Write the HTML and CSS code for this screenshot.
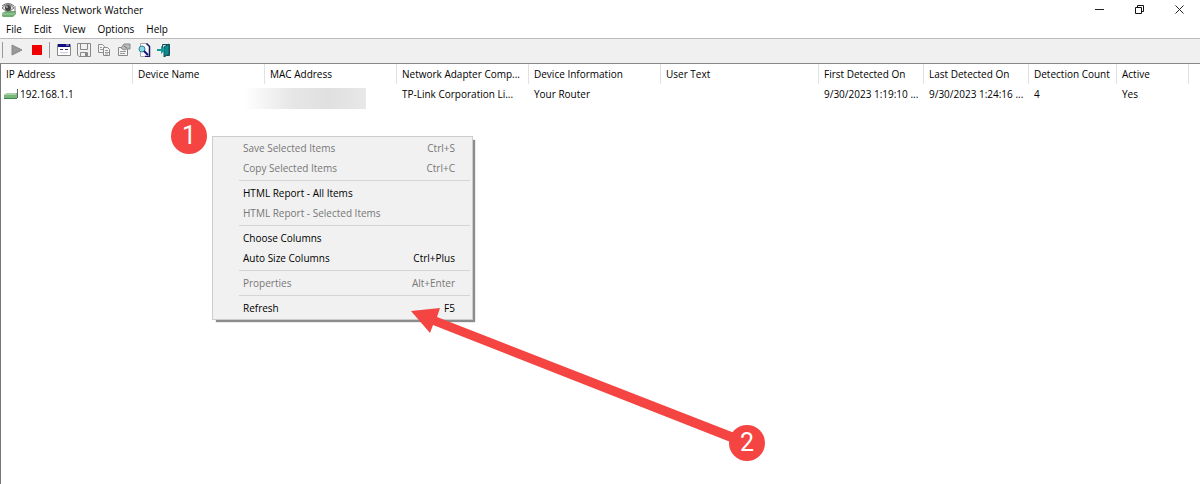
FILE: index.html
```html
<!DOCTYPE html>
<html lang="en">
<head>
    <meta charset="UTF-8">
    <meta name="viewport" content="width=device-width, initial-scale=1.0">
    <title>Wireless Network Watcher</title>
    <link rel="stylesheet" href="styles.css">
</head>
<body>
    <header class="titlebar">
        <svg class="app-icon" width="16" height="16" viewBox="0 0 16 16">
            <path d="M1 11l4-2h9l1 1v2l-3 3H2l-1-1z" fill="#6fae72"/>
            <path d="M1 12h11l3-2" stroke="#a9d3aa" fill="none"/>
            <path d="M14 4v7" stroke="#777"/>
            <path d="M1 6Q7-1 13 6Q7 12 1 6z" fill="#e4e4e4" stroke="#777"/>
            <path d="M1 4Q7-1 13 4" stroke="#666" fill="none"/>
            <circle cx="7" cy="6" r="3" fill="#444"/>
            <circle cx="6" cy="5" r="1" fill="#aaa"/>
        </svg>
        <h1 class="title">Wireless Network Watcher</h1>
        <div class="window-buttons">
            <button class="window-button" aria-label="Minimize">
                <svg width="10" height="10" viewBox="0 0 10 10"><path d="M0 4.500h9" stroke="#222"/></svg>
            </button>
            <button class="window-button" aria-label="Restore">
                <svg width="10" height="10" viewBox="0 0 10 10"><path d="M.5 2.500h6v6h-6zM2.500 2V.5h6v6H7" fill="none" stroke="#111"/></svg>
            </button>
            <button class="window-button" aria-label="Close">
                <svg width="10" height="10" viewBox="0 0 10 10"><path d="M.5.5l8 8M8.500.5l-8 8" stroke="#222"/></svg>
            </button>
        </div>
    </header>

    <nav class="menubar">
        <button class="menubar-item">File</button>
        <button class="menubar-item">Edit</button>
        <button class="menubar-item">View</button>
        <button class="menubar-item">Options</button>
        <button class="menubar-item">Help</button>
    </nav>

    <div class="toolbar">
        <div class="tool-group">
            <button class="tool" aria-label="Start scanning">
                <svg width="14" height="14" viewBox="0 0 14 14"><path d="M2 2l10 5-10 5z" fill="#999" stroke="#888"/></svg>
            </button>
            <button class="tool" aria-label="Stop scanning">
                <svg width="14" height="14" viewBox="0 0 14 14"><path d="M2 2h10v10H2z" fill="#f00000"/></svg>
            </button>
        </div>
        <div class="tool-group">
            <button class="tool" aria-label="Choose columns">
                <svg width="14" height="14" viewBox="0 0 14 14">
                    <path d="M.5 1.500h13v11H.5z" fill="#fff" stroke="#888"/>
                    <path d="M1 1h12v3H1z" fill="#10107c"/>
                    <path d="M9 2h3" stroke="#ccc"/>
                    <path d="M3 6.500h3M8 6.500h3" stroke="#33338a"/>
                    <path d="M3 9.500h8" stroke="#d0d0d8"/>
                </svg>
            </button>
            <button class="tool" aria-label="Save selected items">
                <svg width="14" height="14" viewBox="0 0 14 14">
                    <path d="M.5.5h13v13H2L.5 12zM3.500.5v6h7v-6M3.500 13.500v-4h7v4" fill="none" stroke="#888"/>
                    <path d="M8 10h2v3H8z" fill="#888"/>
                </svg>
            </button>
            <button class="tool" aria-label="Copy selected items">
                <svg width="14" height="14" viewBox="0 0 14 14">
                    <path d="M1.500 1.500h4l2 2v6h-6z" fill="#f5f5f5" stroke="#909090"/>
                    <path d="M6.500 4.500h4l2 2v6h-6z" fill="#f5f5f5" stroke="#888"/>
                    <path d="M3 4.500h2M3 6.500h3M8 7.500h3M8 9.500h4M8 11h3" stroke="#999"/>
                </svg>
            </button>
            <button class="tool" aria-label="Properties">
                <svg width="14" height="14" viewBox="0 0 14 14">
                    <path d="M1.500 4.500h9v8h-9z" fill="#f5f5f5" stroke="#888"/>
                    <path d="M3 8.500h6M3 10.500h5" stroke="#999"/>
                    <path d="M4 5l3-4h6v5H9L7 7z" fill="#bbb" stroke="#888"/>
                    <path d="M7 3l3 2" stroke="#777"/>
                </svg>
            </button>
            <button class="tool" aria-label="Find">
                <svg width="14" height="14" viewBox="0 0 14 14">
                    <path d="M3.500.5h6l3 3v10h-9z" fill="#fff" stroke="#aaa"/>
                    <path d="M9.500.5l3 3v10H8" fill="none" stroke="#171765" stroke-width="1.5"/>
                    <circle cx="5" cy="6" r="3" fill="#88dce4" stroke="#327d99"/>
                    <path d="M7 8l4 4" stroke="#14147c" stroke-width="2"/>
                </svg>
            </button>
            <button class="tool" aria-label="Exit">
                <svg width="14" height="14" viewBox="0 0 14 14">
                    <path d="M5.500 5V1.500h7v11h-5" fill="#b9dede" stroke="#164f59"/>
                    <path d="M7 4l5-3v10l-5 3z" fill="#0b8d8d" stroke="#164f59"/>
                    <path d="M0 6h4V3l4 4-4 4V8H0z" fill="#129999"/>
                </svg>
            </button>
        </div>
    </div>

    <main class="list">
        <table class="devices">
            <colgroup>
                <col class="col-medium"><col class="col-medium"><col class="col-medium"><col class="col-medium"><col class="col-medium">
                <col class="col-wide"><col class="col-date"><col class="col-date"><col class="col-count"><col class="col-active">
            </colgroup>
            <thead>
                <tr>
                    <th>IP Address</th>
                    <th>Device Name</th>
                    <th>MAC Address</th>
                    <th>Network Adapter Comp...</th>
                    <th>Device Information</th>
                    <th>User Text</th>
                    <th>First Detected On</th>
                    <th>Last Detected On</th>
                    <th>Detection Count</th>
                    <th>Active</th>
                </tr>
            </thead>
            <tbody>
                <tr>
                    <td class="address">
                        <svg class="device-icon" width="14" height="12" viewBox="0 0 14 12">
                            <path d="M0 6l3-2h10v5l-1 1H0z" fill="#79b77c"/>
                            <path d="M0 6l3-2h9v2z" fill="#a7d2a8"/>
                            <path d="M0 9.500h13" stroke="#438447"/>
                            <path d="M13.500 0v9" stroke="#666"/>
                        </svg>192.168.1.1</td>
                    <td></td>
                    <td class="mac"><span class="redacted"></span></td>
                    <td>TP-Link Corporation Li...</td>
                    <td>Your Router</td>
                    <td></td>
                    <td>9/30/2023 1:19:10 ...</td>
                    <td>9/30/2023 1:24:16 ...</td>
                    <td>4</td>
                    <td>Yes</td>
                </tr>
            </tbody>
        </table>
    </main>

    <div class="context-menu">
        <button class="menu-item" disabled><span>Save Selected Items</span><span>Ctrl+S</span></button>
        <button class="menu-item" disabled><span>Copy Selected Items</span><span>Ctrl+C</span></button>
        <hr class="menu-line">
        <button class="menu-item"><span>HTML Report - All Items</span></button>
        <button class="menu-item" disabled><span>HTML Report - Selected Items</span></button>
        <hr class="menu-line">
        <button class="menu-item"><span>Choose Columns</span></button>
        <button class="menu-item"><span>Auto Size Columns</span><span>Ctrl+Plus</span></button>
        <hr class="menu-line">
        <button class="menu-item" disabled><span>Properties</span><span>Alt+Enter</span></button>
        <hr class="menu-line">
        <button class="menu-item"><span>Refresh</span><span>F5</span></button>
    </div>

    <svg class="arrow" width="336" height="136" viewBox="0 0 336 136">
        <path d="M0 3l29-3-3 9 300 117-4 9L22 17l-3 8z" fill="#f44542"/>
    </svg>
    <span class="step step-one">1</span>
    <span class="step step-two">2</span>
</body>
</html>
```
FILE: styles.css
```css
* {
    box-sizing: border-box;
}
body {
    position: relative;
    display: flex;
    flex-direction: column;
    min-height: 100vh;
    margin: 0;
    background-color: #fff;
    color: #000;
    font-family: "Open Sans", "Noto Sans", sans-serif;
    font-size: 10px;
    line-height: 20px;
}
button {
    margin: 0;
    padding: 0;
    border: none;
    background: none;
    color: inherit;
    font: inherit;
}
svg {
    display: block;
}

/* Title bar and menus */
.titlebar {
    display: flex;
    align-items: center;
    height: 20px;
    padding-left: 1px;
}
.title {
    flex: 1;
    margin: 0 0 0 3px;
    font-size: 10px;
    font-weight: normal;
}
.window-buttons {
    display: flex;
}
.window-button {
    display: flex;
    align-items: center;
    justify-content: center;
    width: 40px;
    height: 18px;
}
.menubar {
    display: flex;
    height: 18px;
    line-height: 18px;
}
.menubar-item {
    padding: 0 6px;
}
.toolbar {
    display: flex;
    align-items: center;
    height: 26px;
    padding: 0 0 2px 2px;
    border-top: 1px solid #bbb;
    border-bottom: 1px solid #888;
    background-color: #f0f0f0;
}
.tool-group {
    display: flex;
    padding: 0 2px 0 4px;
    border-left: 1px solid #999;
}
.tool {
    display: flex;
    align-items: center;
    justify-content: center;
    width: 20px;
    height: 16px;
}

/* Device list */
.list {
    flex: 1;
    border-left: 1px solid #777;
}
.devices {
    width: 1188px;
    table-layout: fixed;
    border-collapse: separate;
    border-spacing: 0;
}
.col-medium {
    width: 132px;
}
.col-wide {
    width: 158px;
}
.col-date {
    width: 105px;
}
.col-count {
    width: 88px;
}
.col-active {
    width: 72px;
}
.devices th,
.devices td {
    height: 20px;
    padding: 0 5px;
    overflow: hidden;
    font-weight: normal;
    text-align: left;
    text-overflow: ellipsis;
    white-space: nowrap;
}
.devices th {
    border-right: 1px solid #e2e2e2;
}
.devices .address {
    padding-left: 3px;
}
.device-icon {
    display: inline-block;
    margin-right: 2px;
    vertical-align: middle;
}
.devices .mac {
    position: relative;
    overflow: visible;
}
.redacted {
    position: absolute;
    top: 4px;
    left: -21px;
    width: 122px;
    height: 21px;
    background: linear-gradient(to right, #fff, #e6e6e6 40%, #e0e0e0 70%, #e8e8e8);
}

/* Context menu */
.context-menu {
    position: absolute;
    top: 136px;
    left: 212px;
    width: 261px;
    padding: 1px 2px;
    border: 1px solid #ccc;
    background-color: #f1f1f1;
    box-shadow: 3px 3px 1px -1px #8c8c8c;
}
.menu-item {
    display: flex;
    justify-content: space-between;
    width: 100%;
    padding: 0 15px 0 28px;
    color: #000;
}
.menu-item:disabled {
    color: #777;
}
.menu-line {
    height: 1px;
    margin: 2px 0 2px 24px;
    border: none;
    background-color: #d5d5d5;
}

/* Step markers */
.arrow {
    position: absolute;
    top: 308px;
    left: 411px;
}
.step {
    position: absolute;
    width: 36px;
    height: 36px;
    border-radius: 50%;
    background-color: #f44542;
    color: #fff;
    font-family: Roboto, sans-serif;
    font-size: 25px;
    line-height: 36px;
    text-align: center;
}
.step-one {
    top: 118px;
    left: 171px;
}
.step-two {
    top: 425px;
    left: 729px;
}
```
